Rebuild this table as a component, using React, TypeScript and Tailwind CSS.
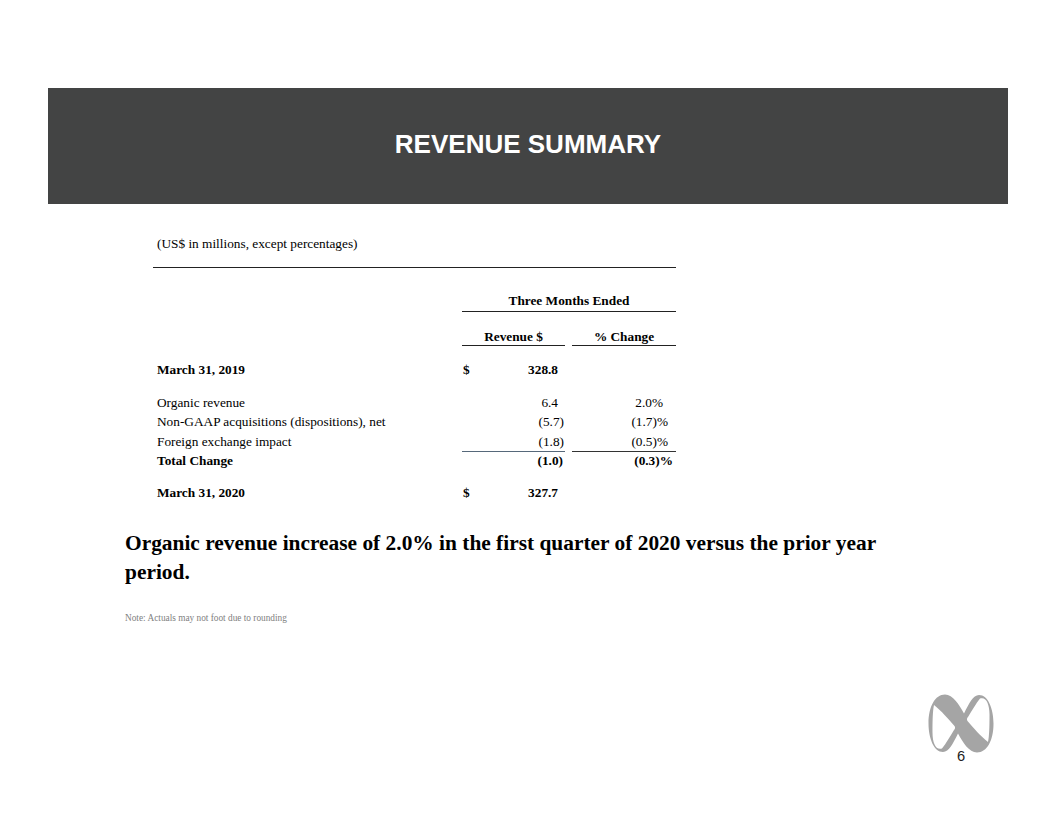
import React from 'react';

const serif = "font-['Liberation_Serif','Times_New_Roman',serif]";

// infinity mark: one gray body with two white eyes (the right one is the left one turned round)
const BODY =
  'M19 2 C27 2 33 12 38 21 C43 11 47 2.5 53 2.5 C62 2.5 67.5 16 67.5 31 C67.5 48 61 60 51 60 C43 60 37 50 32 41 C27 51 23 59.5 17 59.5 C8 59.5 2.5 46 2.5 31 C2.5 14 9 2 19 2 Z';
const HOLE =
  'M8 12.5 C15 18 23 27 28.5 33.5 C29.5 35 29 36.5 28 37.5 C24 44 20 51 16 56 C10 58 6.5 51 6.5 40 C6.5 27 6.8 18 8 12.5 Z';

const Logo = () => (
  <svg width="70" height="62" viewBox="0 0 70 62">
    <g transform="translate(0 0.5)">
      <path fill="#a5a5a5" d={BODY} />
      <path fill="#fff" d={HOLE} />
      <path fill="#fff" d={HOLE} transform="rotate(180 35 31)" />
    </g>
  </svg>
);

interface RowProps {
  label: string;
  rev?: string;
  pct?: string;
  dollar?: boolean;
  bold?: boolean;
  revPad?: string;
  pctPad?: string;
  underline?: boolean;
  leading?: string;
}

const Row: React.FC<RowProps> = ({ label, rev, pct, dollar, bold, revPad = 'pr-[7px]', pctPad = 'pr-[13px]', underline, leading = 'leading-[19.5px]' }) => (
  <div className={`flex ${leading} ${bold ? 'font-bold' : ''}`}>
    <div className="w-[309px] pl-[4px]">{label}</div>
    <div className={`w-[103px] flex justify-between ${revPad} ${underline ? 'border-b-[1.5px] border-[#56687a]' : ''}`}>
      <span className="pl-[1px]">{dollar ? '$' : ''}</span>
      <span>{rev}</span>
    </div>
    <div className="w-[7px]" />
    <div className={`w-[104px] text-right ${pctPad} ${underline ? 'border-b-[1.5px] border-[#333]' : ''}`}>{pct}</div>
  </div>
);

export default function App() {
  return (
    <div className="w-[1056px] h-[816px] bg-white flex flex-col overflow-hidden">
      <div className="mx-[48px] mt-[88px] h-[116px] bg-[#434444] flex items-center justify-center">
        <h1 className="pb-[4px] text-white font-bold text-[26px] font-['Liberation_Sans',Arial,sans-serif]">REVENUE SUMMARY</h1>
      </div>

      <div className={`ml-[153px] w-[523px] text-[13.3px] text-black ${serif}`}>
        <div className="mt-[32px] pl-[4px] leading-[16px]">(US$ in millions, except percentages)</div>
        <div className="mt-[15px] border-t-[1.5px] border-[#222]" />

        <div className="mt-[25px] flex">
          <div className="w-[309px]" />
          <div className="w-[214px] text-center font-bold leading-[16px] pb-[2px] border-b-[1.5px] border-[#222]">Three Months Ended</div>
        </div>

        <div className="mt-[17px] flex font-bold leading-[16px]">
          <div className="w-[309px]" />
          <div className="w-[103px] text-center border-b-[1.5px] border-[#222]">Revenue $</div>
          <div className="w-[7px]" />
          <div className="w-[104px] text-center border-b-[1.5px] border-[#222]">% Change</div>
        </div>

        <div className="mt-[15.5px]">
          <Row label="March 31, 2019" rev="328.8" dollar bold leading="leading-[16px]" />
        </div>

        <div className="mt-[15px]">
          <Row label="Organic revenue" rev="6.4" pct="2.0%" />
          <Row label="Non-GAAP acquisitions (dispositions), net" rev="(5.7)" pct="(1.7)%" revPad="pr-[1px]" pctPad="pr-[8px]" />
          <Row label="Foreign exchange impact" rev="(1.8)" pct="(0.5)%" revPad="pr-[1px]" pctPad="pr-[8px]" underline />
          <Row label="Total Change" rev="(1.0)" pct="(0.3)%" bold revPad="pr-[2px]" pctPad="pr-[3px]" leading="leading-[17px]" />
        </div>

        <div className="mt-[16px]">
          <Row label="March 31, 2020" rev="327.7" dollar bold leading="leading-[16px]" />
        </div>
      </div>

      <div className={`ml-[125px] w-[790px] mt-[27.5px] text-[21.4px] leading-[29px] font-bold text-black ${serif}`}>
        Organic revenue increase of 2.0% in the first quarter of 2020 versus the prior year period.
      </div>

      <div className={`ml-[125px] mt-[25.5px] text-[9.3px] leading-[12px] text-[#808080] ${serif}`}>
        Note: Actuals may not foot due to rounding
      </div>

      <div className="mt-auto mb-[52px] mr-[60px] self-end flex flex-col items-center">
        <Logo />
        <div className="-mt-[6px] text-[14.7px] leading-[16px] text-[#222] font-['Liberation_Sans',Arial,sans-serif]">6</div>
      </div>
    </div>
  );
}
